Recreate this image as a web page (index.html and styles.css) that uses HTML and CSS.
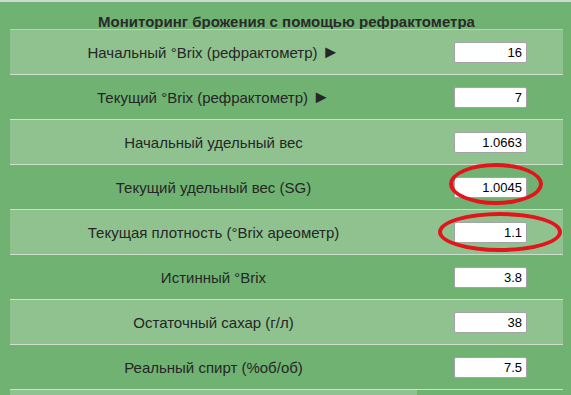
FILE: index.html
```html
<!DOCTYPE html>
<html lang="ru">
<head>
<meta charset="utf-8">
<link rel="stylesheet" href="styles.css">
</head>
<body>
<div class="page">
  <div class="title">Мониторинг брожения с помощью рефрактометра</div>
  <div class="table">
    <div class="row light first">
      <div class="label">Начальный °Brix (рефрактометр)&nbsp;<span class="arrow">►</span></div>
      <div class="cell"><input class="val" value="16"></div>
    </div>
    <div class="row">
      <div class="label">Текущий °Brix (рефрактометр)&nbsp;<span class="arrow">►</span></div>
      <div class="cell"><input class="val" value="7"></div>
    </div>
    <div class="row light">
      <div class="label">Начальный удельный вес</div>
      <div class="cell"><input class="val" value="1.0663"></div>
    </div>
    <div class="row">
      <div class="label">Текущий удельный вес (SG)</div>
      <div class="cell"><input class="val" value="1.0045"></div>
      <span class="ring ring-sg"></span>
    </div>
    <div class="row light">
      <div class="label">Текущая плотность (°Brix ареометр)</div>
      <div class="cell"><input class="val" value="1.1"></div>
      <span class="ring ring-brix"></span>
    </div>
    <div class="row">
      <div class="label">Истинный °Brix</div>
      <div class="cell"><input class="val" value="3.8"></div>
    </div>
    <div class="row light">
      <div class="label">Остаточный сахар (г/л)</div>
      <div class="cell"><input class="val" value="38"></div>
    </div>
    <div class="row">
      <div class="label">Реальный спирт (%об/об)</div>
      <div class="cell"><input class="val" value="7.5"></div>
    </div>
    <div class="row tail">
      <div class="label lightcell"></div>
      <div class="cell"></div>
    </div>
  </div>
</div>
</body>
</html>
```

FILE: styles.css
```css
html, body {
  margin: 0;
  padding: 0;
  background: #6fb272;
  overflow: hidden;
}
.page {
  border-top: 2px solid #cfd9cf;
  padding: 0 8px 0 10px;
  font-family: "Liberation Sans", Arial, sans-serif;
  color: #2b2b2b;
}
.title {
  padding-top: 12px;
  height: 15px;
  line-height: 15px;
  font-size: 15px;
  font-weight: bold;
  text-align: center;
  color: #2a2a2a;
  white-space: nowrap;
}
.table {
  width: 553px;
}
.row {
  position: relative;
  display: grid;
  grid-template-columns: 407px 146px;
  height: 44px;
  border-bottom: 1px solid #cde0cd;
}
.row.first {
  border-top: 1px solid #b5d4b5;
}
.row.light {
  background: #8fc28f;
}
.label {
  display: flex;
  align-items: center;
  justify-content: center;
  font-size: 15px;
  color: #262626;
  white-space: nowrap;
}
.arrow {
  display: inline-block;
  font-size: 18px;
  line-height: 15px;
  margin-top: 1px;
}
.cell {
  display: flex;
  align-items: center;
  justify-content: center;
  padding-left: 1px;
}
.val {
  box-sizing: border-box;
  width: 73px;
  height: 21px;
  margin: 0;
  padding: 0 4px 0 2px;
  border: 1px solid #a3a3a8;
  border-radius: 2px;
  background: #fff;
  font-family: "Liberation Sans", Arial, sans-serif;
  font-size: 13px;
  color: #000;
  text-align: right;
}
.row.tail {
  border-bottom: 0;
}
.lightcell {
  background: #8fc28f;
}
.ring {
  position: absolute;
  box-sizing: border-box;
  border: 4px solid #e3151c;
  border-radius: 50%;
  pointer-events: none;
}
.ring-sg {
  left: 439px;
  top: -2px;
  width: 94px;
  height: 42px;
}
.ring-brix {
  left: 428px;
  top: 2px;
  width: 124px;
  height: 40px;
}
```
